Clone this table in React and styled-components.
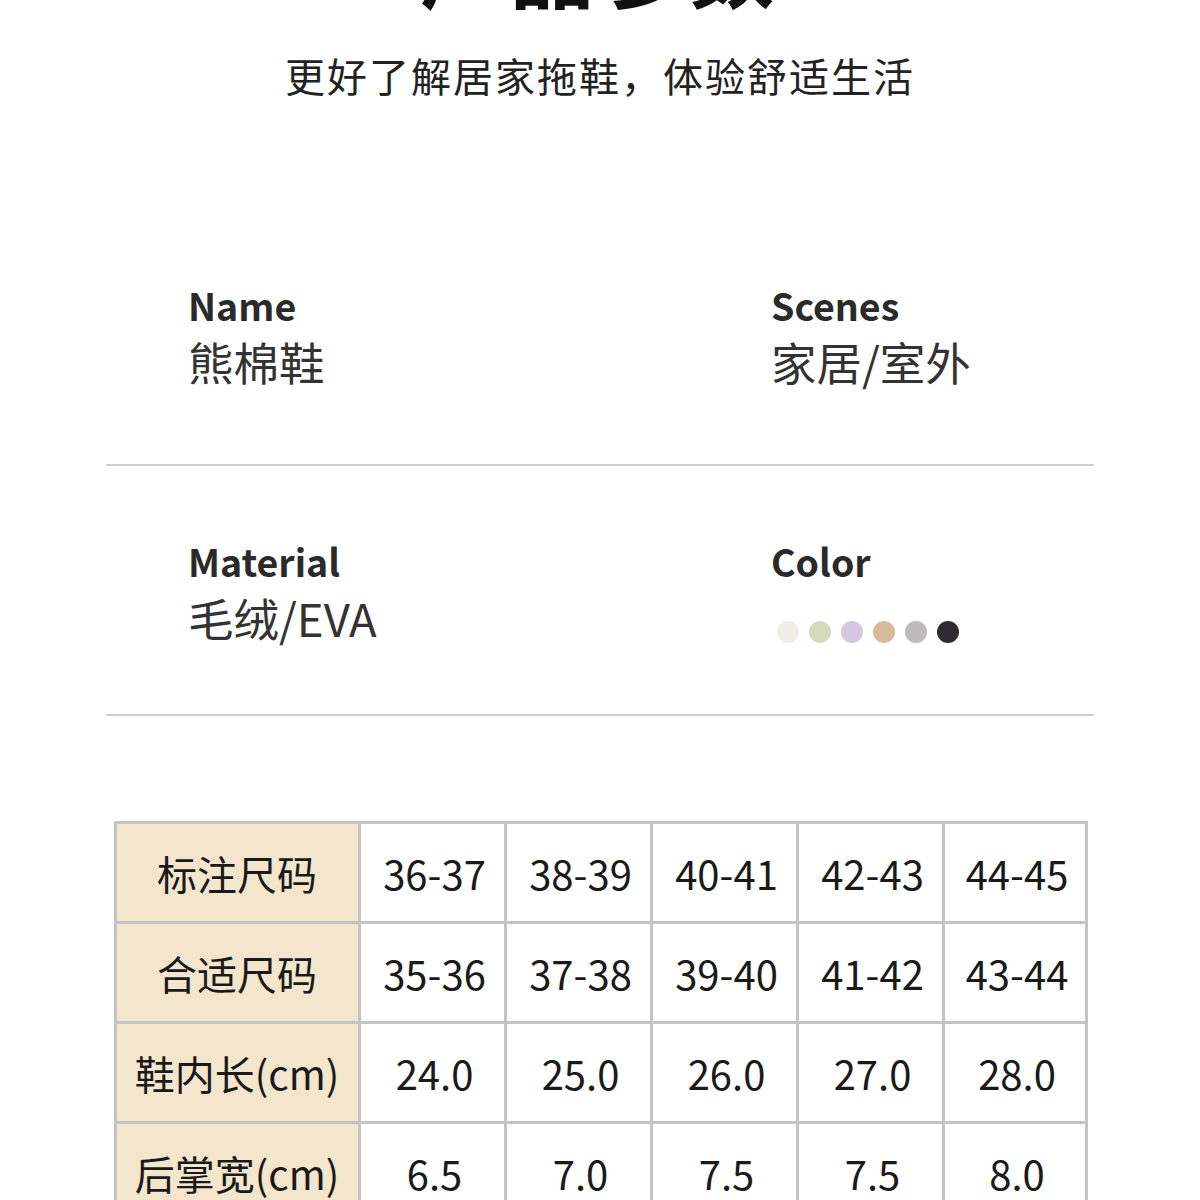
import styled, { createGlobalStyle } from 'styled-components'

const GlobalStyle = createGlobalStyle`
  body {
    margin: 0;
    background: #ffffff;
    font-family: 'Noto Sans CJK SC', 'Noto Sans', sans-serif;
    color: #222;
  }
`

const info = [
  [
    { label: 'Name', value: '熊棉鞋' },
    { label: 'Scenes', value: '家居/室外' },
  ],
  [
    { label: 'Material', value: '毛绒/EVA' },
    { label: 'Color', dots: ['#f1eee7', '#d3dbbc', '#d5c7df', '#d9ba9b', '#bdbbbb', '#2e2c30'] },
  ],
]

const sizes = [
  { head: '标注尺码', cells: ['36-37', '38-39', '40-41', '42-43', '44-45'] },
  { head: '合适尺码', cells: ['35-36', '37-38', '39-40', '41-42', '43-44'] },
  { head: '鞋内长(cm)', cells: ['24.0', '25.0', '26.0', '27.0', '28.0'] },
  { head: '后掌宽(cm)', cells: ['6.5', '7.0', '7.5', '7.5', '8.0'] },
]

const App = () => {
  return (
    <Page>
      <GlobalStyle />
      <Header>
        <Title>产品参数</Title>
        <Subtitle>更好了解居家拖鞋，体验舒适生活</Subtitle>
      </Header>

      <InfoList>
        {info.map((row, i) => (
          <InfoRow key={i} first={i === 0}>
            {row.map((item) => (
              <InfoItem key={item.label}>
                <Label>{item.label}</Label>
                {item.value && <Value>{item.value}</Value>}
                {item.dots && (
                  <Dots>
                    {item.dots.map((c) => (
                      <Dot key={c} color={c} />
                    ))}
                  </Dots>
                )}
              </InfoItem>
            ))}
          </InfoRow>
        ))}
      </InfoList>

      <SizeTable>
        <colgroup>
          <col style={{ width: 244 }} />
          <col style={{ width: 146 }} />
          <col style={{ width: 146 }} />
          <col style={{ width: 146 }} />
          <col style={{ width: 146 }} />
          <col style={{ width: 143 }} />
        </colgroup>
        <tbody>
          {sizes.map((r) => (
            <tr key={r.head}>
              <HeadCell>{r.head}</HeadCell>
              {r.cells.map((c, j) => (
                <Cell key={j}>{c}</Cell>
              ))}
            </tr>
          ))}
        </tbody>
      </SizeTable>
    </Page>
  )
}

const Page = styled.div`
  width: 1200px;
  height: 1200px;
  overflow: hidden;
  display: flex;
  flex-direction: column;
  align-items: center;
`

const Header = styled.div`
  display: flex;
  flex-direction: column;
  align-items: center;
  margin-top: -76px;
`

const Title = styled.h1`
  margin: 0;
  font-size: 84px;
  line-height: 84px;
  font-weight: 700;
  letter-spacing: 6px;
  color: #111;
`

const Subtitle = styled.p`
  margin: 43px 0 0;
  font-size: 40px;
  line-height: 48px;
  letter-spacing: 2px;
  color: #222;
`

const InfoList = styled.div`
  width: 988px;
  margin-top: 117px;
`

const InfoRow = styled.div`
  height: 250px;
  box-sizing: border-box;
  display: grid;
  grid-template-columns: 583px 1fr;
  padding: ${(props) => (props.first ? '64px' : '70px')} 0 0 82px;
  border-bottom: 2px solid #cfcfcf;
`

const InfoItem = styled.div`
  display: flex;
  flex-direction: column;
`

const Label = styled.div`
  font-size: 37.5px;
  line-height: 50px;
  font-weight: 700;
  color: #2a2a2a;
`

const Value = styled.div`
  font-size: 45.5px;
  line-height: 60px;
  color: #333;
  margin-top: 1px;
`

const Dots = styled.div`
  display: flex;
  gap: 10px;
  margin-top: 35px;
  padding-left: 6px;
`

const Dot = styled.span`
  width: 22px;
  height: 22px;
  border-radius: 50%;
  background: ${(props) => props.color};
`

const SizeTable = styled.table`
  margin-top: 105px;
  margin-left: 1px;
  width: 974px;
  table-layout: fixed;
  border-collapse: collapse;
  border: 3px solid #c4c4c4;
`

const Cell = styled.td`
  height: 97px;
  padding: 0 0 0 5px;
  border: 3px solid #c4c4c4;
  text-align: center;
  font-size: 40px;
  color: #1a1a1a;
  background: #fff;
`

const HeadCell = styled(Cell)`
  padding: 0;
  background: #f4e6cd;
`

export default App
